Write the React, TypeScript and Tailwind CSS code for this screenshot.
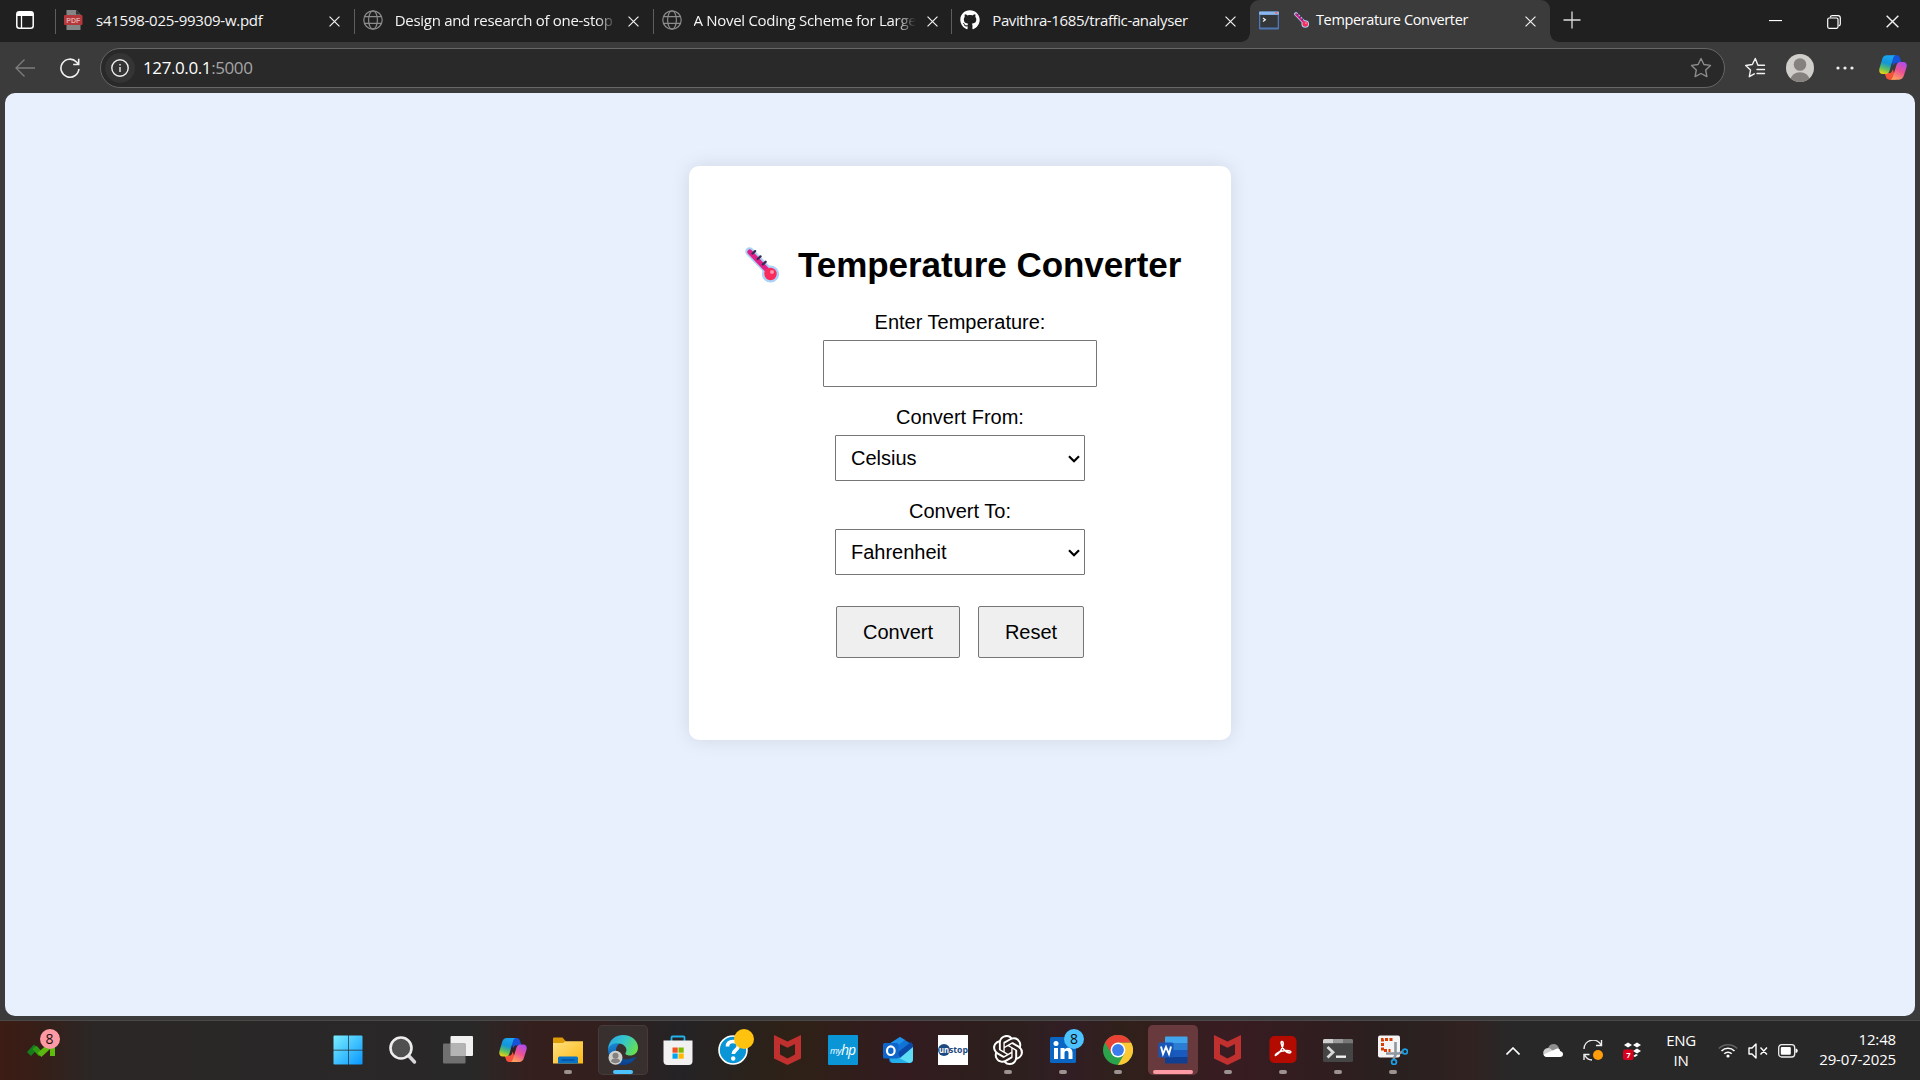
import React from 'react';
import { FaGithub } from 'react-icons/fa';
import { SiOpenai } from 'react-icons/si';

const Thermometer = ({ className }: { className: string }) => (
  <svg viewBox="0 0 34 36" className={className}>
    <path d="M4.5 4.5 L25 25.5" stroke="#a9d3f8" strokeWidth="8.6" strokeLinecap="round" />
    <circle cx="25.5" cy="27" r="8.6" fill="#a9d3f8" />
    <path d="M4.8 5 L24 25" stroke="#e0218a" strokeWidth="5" strokeLinecap="round" />
    <path d="M7.5 6.5 l2.6-2.4 M12.7 12 l2.8-2.6 M17.8 17.4 l2.8-2.6" stroke="#3b2a55" strokeWidth="2.3" strokeLinecap="round" />
    <circle cx="25.5" cy="27" r="6.2" fill="#fb2c5b" />
    <circle cx="27" cy="25" r="2" fill="#ff93ac" />
  </svg>
);

const Copilot = ({ className, id }: { className: string; id: string }) => (
  <svg viewBox="0 0 30 28" className={className}>
    <defs>
      <linearGradient id={id + 'a'} x1="0.5" y1="0" x2="0.2" y2="1">
        <stop offset="0" stopColor="#1aa5ee" />
        <stop offset="0.4" stopColor="#1495d8" />
        <stop offset="0.7" stopColor="#5bbf62" />
        <stop offset="1" stopColor="#f5d30f" />
      </linearGradient>
      <linearGradient id={id + 'b'} x1="0.8" y1="0" x2="0.3" y2="1">
        <stop offset="0" stopColor="#a94cf0" />
        <stop offset="0.5" stopColor="#ee5193" />
        <stop offset="1" stopColor="#fda35c" />
      </linearGradient>
    </defs>
    <path d="M12 1 H19 C21.5 1 22.3 3 23 5.2 L24 9 H19.5 C17 9 16 10 15.2 12.5 Z" fill="#1753d8" />
    <path d="M18 27 H11 C8.5 27 7.7 25 7 22.8 L6 20 H10.5 C13 20 14 18.5 14.8 15.5 Z" fill="#f4533a" />
    <path d="M8.5 1 H18 C16 1.3 15.4 3 14.7 5.4 L11.5 17 C10.8 19.4 9.7 21 7 21 H4 C.5 21 -.4 18 .6 14.5 L3.3 5.3 C4.2 2.5 5.7 1 8.5 1Z" fill={`url(#${id}a)`} />
    <path d="M21.5 27 H12 C14 26.7 14.6 25 15.3 22.6 L18.5 12 C19.2 9.5 20.3 8 23 8 H26 C29.5 8 30.4 11 29.4 14 L26.7 22.7 C25.8 25.5 24.3 27 21.5 27Z" fill={`url(#${id}b)`} />
  </svg>
);

const Globe = () => (
  <svg viewBox="0 0 20 20" className="size-5" fill="none" stroke="#8b8b8b" strokeWidth="1.2">
    <circle cx="10" cy="10" r="9.2" />
    <ellipse cx="10" cy="10" rx="4.4" ry="9.2" />
    <path d="M1.5 6.6h17M1.5 13.4h17" />
  </svg>
);

const PdfIcon = () => (
  <svg viewBox="0 0 20 20" className="size-5">
    <path d="M2.500 0h9.500l4.500 4.500V20H2.500z" fill="#858585" />
    <path d="M12 0v4.500h4.500z" fill="#333" />
    <rect x="0" y="5" width="18.500" height="10" rx="1" fill="#b3373b" />
    <text x="9.300" y="12.600" textAnchor="middle" fontFamily="Liberation Sans" fontWeight="bold" fontSize="7" fill="#e0a9a9">PDF</text>
  </svg>
);

const ConsoleIcon = () => (
  <svg viewBox="0 0 20 20" className="size-5">
    <rect x="0" y="1.500" width="20" height="18" rx="1" fill="#4f78b5" />
    <rect x="0" y="1.500" width="20" height="3.200" rx="1" fill="#8ab8ec" />
    <rect x="16" y="2" width="2.500" height="2" fill="#d77c78" />
    <rect x="1.300" y="5" width="17.400" height="12.500" fill="#34373a" />
    <path d="M4 8l2.300 1.700L4 11.500" stroke="#eee" strokeWidth="1.300" fill="none" />
  </svg>
);

const Cross = ({ className }: { className: string }) => (
  <svg viewBox="0 0 12 12" className={className} fill="none" stroke="#f2f2f2" strokeWidth="1.3">
    <path d="M.6.6l10.800 10.800M11.400.6L.6 11.400" />
  </svg>
);

const tabs = [
  { icon: <PdfIcon />, title: 's41598-025-99309-w.pdf', fade: false, font: 'tracking-[-0.25px]' },
  { icon: <Globe />, title: 'Design and research of one-stop s', fade: true, font: 'tracking-[-0.3px]' },
  { icon: <Globe />, title: 'A Novel Coding Scheme for Large', fade: true, font: 'tracking-[-0.3px]' },
  { icon: <FaGithub className="size-5 text-white" />, title: 'Pavithra-1685/traffic-analyser', fade: false, font: 'tracking-[-0.38px]' },
];

function TabStrip() {
  return (
    <div className="flex h-[42px] bg-[#202020]">
      <div className="flex w-[55px] items-center pl-4 pb-[2px]">
        <svg viewBox="0 0 18 18" className="size-[18px]">
          <rect x="0.800" y="0.800" width="16.400" height="16.400" rx="2.500" fill="none" stroke="#fff" strokeWidth="1.500" />
          <path d="M1 5V3a2 2 0 012-2h12a2 2 0 012 2v2z" fill="#fff" />
          <path d="M5.500 5v12" stroke="#fff" strokeWidth="1.300" />
        </svg>
      </div>
      {tabs.map((t) => (
        <div key={t.title} className="flex w-[298.750px] shrink-0 items-center pb-[2px]">
          <div className="mt-[3px] h-[25px] w-px bg-[#5e5e5e]" />
          <div className="ml-2 w-5">{t.icon}</div>
          <div className={`ml-3 w-[224px] overflow-hidden whitespace-nowrap text-[15px] leading-5 text-[#f5f5f5] ${t.font} ${t.fade ? '[mask-image:linear-gradient(to_right,black_90%,transparent_99%)]' : ''}`}>{t.title}</div>
          <Cross className="ml-[9px] mt-[2px] size-[11px]" />
        </div>
      ))}
      <div className="relative flex w-[300px] items-center rounded-t-[9px] bg-[#3b3b3b] pb-[2px]">
        <div className="absolute bottom-0 -left-[9px] size-[9px] bg-[radial-gradient(circle_at_0_0,#202020_8.500px,#3b3b3b_9px)]" />
        <div className="absolute bottom-0 -right-[9px] size-[9px] bg-[radial-gradient(circle_at_100%_0,#202020_8.500px,#3b3b3b_9px)]" />
        <div className="ml-[9px]"><ConsoleIcon /></div>
        <Thermometer className="ml-[15px] h-4 w-[15px]" />
        <div className="ml-[7px] w-[209px] whitespace-nowrap text-[14.500px] leading-5 tracking-[-0.37px] text-white">Temperature Converter</div>
        <Cross className="mt-[2px] size-[11px]" />
      </div>
      <div className="flex w-[192px] items-center pl-[13px] pb-[3px]">
        <svg viewBox="0 0 18 18" className="size-[18px]" stroke="#ddd" strokeWidth="1.300"><path d="M9 .5v17M.5 9h17" /></svg>
      </div>
      <div className="flex flex-1 items-center gap-[45px] pl-[27px] pt-[1px]">
        <svg viewBox="0 0 14 14" className="size-[13px]" stroke="#fff" strokeWidth="1.200"><path d="M0 6h14" /></svg>
        <svg viewBox="0 0 14 14" className="size-[14px]" fill="none" stroke="#fff" strokeWidth="1.200">
          <rect x="0.700" y="3" width="10.300" height="10.300" rx="1.500" />
          <path d="M3.200 2.500C3.400 1.200 4.300.7 5.300.7H11c1.500 0 2.300.8 2.300 2.300v6c0 1-.6 1.700-1.600 1.900" />
        </svg>
        <Cross className="size-[13px]" />
      </div>
    </div>
  );
}

function Toolbar() {
  return (
    <div className="flex h-[51px] items-center bg-[#3b3b3b] pl-[15px]">
      <svg viewBox="0 0 20 20" className="size-5" fill="none" stroke="#7d7d7d" strokeWidth="1.300"><path d="M20 10H1M9.500 1.500L1 10l8.500 8.500" /></svg>
      <svg viewBox="0 0 20 20" className="ml-[25px] size-5" fill="none" stroke="#f0f0f0" strokeWidth="1.600">
        <path d="M18.900 11A9 9 0 1 1 16.500 4l2 2.300M18.700.8v5.700h-5.500" />
      </svg>
      <div className="ml-5 flex h-10 w-[1625px] items-center rounded-full border border-[#676767] bg-[#292929] pl-1">
        <div className="flex size-[30px] items-center justify-center rounded-full bg-[#343434]">
          <svg viewBox="0 0 18 18" className="size-[18px]" fill="none" stroke="#f0f0f0" strokeWidth="1.400"><circle cx="9" cy="9" r="8.200" /><path d="M9 8v5M9 5v1.500" /></svg>
        </div>
        <div className="ml-2 flex-1 text-[17px] leading-6 tracking-[-0.4px] text-white">127.0.0.1<span className="text-[#a5a5a5]">:5000</span></div>
        <svg viewBox="0 0 22 22" className="mr-[12px] size-[22px]" fill="none" stroke="#8c8c8c" strokeWidth="1.400" strokeLinejoin="round">
          <path d="M11 1.500l2.900 6 6.600.9-4.800 4.600 1.200 6.600L11 16.500l-5.900 3.100 1.200-6.600L1.500 8.400l6.600-.9z" />
        </svg>
      </div>
      <svg viewBox="0 0 22 22" className="ml-[19px] size-[22px]" fill="none" stroke="#f2f2f2" strokeWidth="1.400" strokeLinejoin="round" strokeLinecap="round">
        <path d="M20.500 8.300h-6.600L11.300 1.500 8.300 7.500l-6.600 1 4.800 4.600-1.200 6.600 5-2.900M13 12.500h7.500M13 16.500h7.500" />
      </svg>
      <svg viewBox="0 0 28 28" className="ml-[20px] size-7">
        <clipPath id="av"><circle cx="14" cy="14" r="14" /></clipPath>
        <g clipPath="url(#av)"><rect width="28" height="28" fill="#d0cecb" /><circle cx="14" cy="10.500" r="6.300" fill="#85817e" /><ellipse cx="14" cy="26" rx="9.500" ry="7.800" fill="#85817e" /></g>
      </svg>
      <svg viewBox="0 0 18 4" className="ml-[22px] h-1 w-[18px]" fill="#eee"><circle cx="2" cy="2" r="1.600" /><circle cx="9" cy="2" r="1.600" /><circle cx="16" cy="2" r="1.600" /></svg>
      <Copilot id="top" className="ml-[25px] h-[27px] w-7" />
    </div>
  );
}

const Select = ({ value }: { value: string }) => (
  <div className="flex h-[46px] w-[250px] items-center justify-between rounded-[1px] border border-[#767676] bg-white pl-[15px] pr-1 text-[20px] leading-6">
    <span>{value}</span>
    <svg viewBox="0 0 12 8" className="mt-[1px] h-2 w-3" fill="none" stroke="#000" strokeWidth="2.200"><path d="M1 1.200l5 5 5-5" /></svg>
  </div>
);

function Converter() {
  return (
    <div className="flex h-[574px] w-[542px] flex-col items-center rounded-[10px] bg-white pt-[78px] font-['Liberation_Sans',Arial,sans-serif] text-[20px] leading-6 text-black shadow-[0_0_19px_rgba(0,0,0,0.1)]">
      <h1 className="flex w-full items-center pl-[56px] text-[35px] font-bold leading-[42px]">
        <Thermometer className="mr-[19px] h-9 w-[34px]" />
        <span className="whitespace-nowrap tracking-[-0.06px]">Temperature Converter</span>
      </h1>
      <div className="mt-6">Enter Temperature:</div>
      <div className="mt-[6px] h-[47px] w-[274px] rounded-[1px] border border-[#767676] bg-white" />
      <div className="mt-[18px] mb-[6px]">Convert From:</div>
      <Select value="Celsius" />
      <div className="mt-[18px] mb-[6px]">Convert To:</div>
      <Select value="Fahrenheit" />
      <div className="mt-[31px] flex gap-[18px]">
        <button className="h-[52px] w-[124px] rounded-[2px] border border-[#767676] bg-[#efefef]">Convert</button>
        <button className="h-[52px] w-[106px] rounded-[2px] border border-[#767676] bg-[#efefef]">Reset</button>
      </div>
    </div>
  );
}

const McAfee = () => (
  <svg viewBox="0 0 27 30" className="h-[30px] w-[27px]">
    <path d="M0 0L13.500 6.500 27 0V23.500L13.500 30 0 23.500Z M6 9V19.500L13.500 23.500 21 19.500V9L13.500 12.800Z" fill="#c0302e" fillRule="evenodd" />
  </svg>
);

const WindowsIcon = () => (
  <svg viewBox="0 0 30 30" className="size-[30px]">
    <linearGradient id="win" gradientUnits="userSpaceOnUse" x1="0" y1="0" x2="30" y2="30"><stop offset="0" stopColor="#7cf0ff" /><stop offset="1" stopColor="#0795ff" /></linearGradient>
    <path d="M1.500.5h13.500v14.200H.5V1.500a1 1 0 011-1zM15.700.5h12.800a1 1 0 011 1v13.200H15.700zM.5 15.500h14.500v14H1.500a1 1 0 01-1-1zM15.700 15.500h13.800v13a1 1 0 01-1 1H15.700z" fill="url(#win)" />
  </svg>
);

const SearchIcon = () => (
  <svg viewBox="0 0 30 30" className="size-[30px]">
    <path d="M20 20l6.500 7" stroke="#d8d8dc" strokeWidth="3.500" strokeLinecap="round" />
    <circle cx="13" cy="13" r="10.500" fill="#505050" stroke="#ededed" strokeWidth="2.600" />
  </svg>
);

const TaskViewIcon = () => (
  <svg viewBox="0 0 30 30" className="size-[30px]">
    <rect x="7.500" y="1" width="22.500" height="20" rx="1" fill="#f0f0f0" />
    <rect x="0" y="8.500" width="22.500" height="20" rx="1" fill="#707070" />
    <path d="M7.500 8.500h15V21h-15z" fill="#b4b4b4" />
  </svg>
);

const FolderIcon = () => (
  <svg viewBox="0 0 30 27" className="h-[27px] w-[30px]">
    <linearGradient id="fold" x1="0" y1="0" x2="1" y2="1"><stop stopColor="#ffe080" /><stop offset="1" stopColor="#fdb913" /></linearGradient>
    <path d="M0 1.500Q0 .5 1 .5h8.500l3.500 4v5H0z" fill="#dd9b05" />
    <path d="M0 6h10l2.500-1.800H30V26.500H0z" fill="url(#fold)" />
    <path d="M5 26.500V21a1.500 1.500 0 011.500-1.500h17A1.500 1.500 0 0125 21v5.500z" fill="#0873c8" />
    <path d="M8.500 23h13" stroke="#044b93" strokeWidth="1.200" />
  </svg>
);

const EdgeIcon = () => (
  <svg viewBox="0 0 30 30" className="size-[30px]">
    <defs>
      <linearGradient id="e1" x1="0" y1="0.200" x2="1" y2="0.600"><stop stopColor="#2aa7e5" /><stop offset="0.500" stopColor="#35c7c8" /><stop offset="1" stopColor="#66e04e" /></linearGradient>
      <linearGradient id="e2" x1="0" y1="0" x2="0.500" y2="1"><stop stopColor="#1b8fdb" /><stop offset="1" stopColor="#0c3f8f" /></linearGradient>
    </defs>
    <path d="M0 14C1 8 7 6 12 8C8 11 7 15 9 20C11 25 19 26 28 22C25 28 20 30 15 30C6 30 0 23 0 14Z" fill="url(#e2)" />
    <path d="M0 14C1 5 7 0 15 0C24 0 30 6 30 12.500C30 18 26 20.500 22 20.500C19 20.500 16.800 19.300 17.500 18C19.500 15.500 18.500 11 13.500 9C8 7 2 9 0 14Z" fill="url(#e1)" />
    <path d="M9 20C11 25 19 26 28 22C24 30 12 30 9 20Z" fill="#0b4c94" />
    <circle cx="7.500" cy="22.700" r="7" fill="#cfcfcc" /><circle cx="7.500" cy="20.800" r="3" fill="#85817e" /><path d="M3 26.500a4.500 3 0 019 0 6.500 6.500 0 01-9 0z" fill="#85817e" />
  </svg>
);

const StoreIcon = () => (
  <svg viewBox="0 0 30 30" className="size-[30px]">
    <path d="M8.500 7V2.500a1 1 0 011-1h11a1 1 0 011 1V7" fill="none" stroke="#23b4ee" strokeWidth="1.800" />
    <path d="M.5 5.500h29V26a4 4 0 01-4 4h-21a4 4 0 01-4-4z" fill="#f1f1f1" />
    <path d="M9.500 12.500h5.200v5.200H9.500z" fill="#f25022" /><path d="M15.500 12.500h5.200v5.200h-5.200z" fill="#7fba00" /><path d="M9.500 18.500h5.200v5.200H9.500z" fill="#00a4ef" /><path d="M15.500 18.500h5.200v5.200h-5.200z" fill="#ffb900" />
  </svg>
);

const HelpIcon = () => (
  <svg viewBox="0 0 30 30" className="size-[30px] overflow-visible">
    <circle cx="15" cy="15" r="14" fill="#0a96d6" stroke="#fff" strokeWidth="1.600" />
    <path d="M9.500 11.500C9.500 8 12 6.500 15 6.500s5.300 1.800 5.300 4.500c0 4-5 4-5 8" stroke="#fff" strokeWidth="3.600" fill="none" />
    <circle cx="15.200" cy="23.500" r="2.200" fill="#fff" />
    <circle cx="26" cy="4" r="10" fill="#ffc20e" />
  </svg>
);

const MyHp = () => (
  <div className="flex size-[30px] items-center justify-center rounded-[1px] bg-[#0a96d6] font-['Open_Sans',sans-serif] italic leading-none tracking-[-0.5px] text-white">
    <span className="text-[9px]">my</span><span className="text-[14px] tracking-[-1.200px]">hp</span>
  </div>
);

const OutlookIcon = () => (
  <svg viewBox="0 0 30 28" className="h-[28px] w-[30px]">
    <path d="M6 8L17 1l13 8v14a4 4 0 01-4 4H10a4 4 0 01-4-4z" fill="#1273d6" />
    <path d="M6 8L17 1l5 3L9 14z" fill="#1e90e8" />
    <path d="M14 17L28 6l2 3v7L18 23z" fill="#0b49a8" />
    <path d="M30 11v12a4 4 0 01-4 4H11z" fill="#5ddcf6" />
    <path d="M8 18l18 9H11a4 4 0 01-4-4z" fill="#23aee9" />
    <rect x="0" y="7" width="15.500" height="15.500" rx="1.500" fill="#0e66ca" />
    <ellipse cx="7.800" cy="14.700" rx="3.800" ry="4.300" stroke="#fff" strokeWidth="2.200" fill="none" />
  </svg>
);

const Unstop = () => (
  <svg viewBox="0 0 30 30" className="size-[30px]">
    <rect width="30" height="30" fill="#fff" />
    <circle cx="6" cy="15" r="6" fill="#1c4980" />
    <text x="1" y="17.500" fontFamily="Open Sans" fontWeight="bold" fontSize="8.500" fill="#fff" textLength="10" lengthAdjust="spacingAndGlyphs">un</text>
    <text x="11" y="17.500" fontFamily="Open Sans" fontWeight="bold" fontSize="8.500" fill="#1c4980" textLength="19" lengthAdjust="spacingAndGlyphs">stop</text>
  </svg>
);

const LinkedIn = () => (
  <svg viewBox="0 0 30 30" className="size-[30px] overflow-visible">
    <rect x="2" y="2" width="26" height="26" rx="1.500" fill="#0a66c2" />
    <circle cx="8" cy="8.500" r="2.500" fill="#fff" />
    <path d="M6 13h4v11H6zM12.500 13h4v1.500c2.200-3 8-2.500 8 3V24h-4v-6c0-3-4-3-4 0v6h-4z" fill="#fff" />
    <circle cx="26" cy="4" r="10" fill="#4cc2ff" />
    <text x="26" y="9" textAnchor="middle" fontFamily="Open Sans" fontSize="14" fill="#111">8</text>
  </svg>
);

const Chrome = () => (
  <svg viewBox="0 0 30 30" className="size-[30px]">
    <circle cx="15" cy="15" r="15" fill="#2ba24c" />
    <path d="M28 7.500A15 15 0 0115 30L21.500 18.500 15 7.500z" fill="#fcc934" />
    <path d="M2 7.500A15 15 0 0128 7.500H15L8.500 18.700z" fill="#ea4335" />
    <circle cx="15" cy="15" r="7.400" fill="#fff" /><circle cx="15" cy="15" r="5.900" fill="#3b7ded" />
  </svg>
);

const Word = () => (
  <svg viewBox="0 0 30 28" className="h-[28px] w-[30px]">
    <path d="M7 1.500a1 1 0 011-1h20.500a1 1 0 011 1V7H7z" fill="#41a5ee" /><path d="M7 7h22.500v7H7z" fill="#2b7cd3" /><path d="M7 14h22.500v7H7z" fill="#185abd" /><path d="M7 21h22.500v5.500a1 1 0 01-1 1H8a1 1 0 01-1-1z" fill="#103f91" />
    <rect x="0.500" y="6.500" width="15" height="15" rx="1.500" fill="#1857b8" />
    <path d="M3 10.500l2 7.500L8 11l3 7 2-7.500" stroke="#fff" strokeWidth="1.900" fill="none" />
  </svg>
);

const Acrobat = () => (
  <svg viewBox="0 0 28 28" className="mb-[2px] h-[27px] w-[28px]">
    <rect width="28" height="28" rx="5" fill="#b30b00" />
    <path d="M6.500 20C11 18 15 10.500 14 6.500c-.4-1.500-2.200-1-2 .8.500 5 5 10 8.500 10.200 2.300 0 2.200-2-.2-2.300-4-.4-10 .8-13 3-1.600 1.300-1.500 2.300-.8 1.800z" fill="none" stroke="#fff" strokeWidth="1.600" />
  </svg>
);

const Terminal = () => (
  <svg viewBox="0 0 30 23" className="h-[23px] w-[30px]">
    <rect width="30" height="23" rx="1.500" fill="#454545" />
    <path d="M0 4.200V1.500A1.500 1.500 0 011.500 0H10v4.200z" fill="#cfcfcf" /><path d="M10 0h10v4.200H10z" fill="#9a9a9a" /><path d="M20 0h8.500A1.500 1.500 0 0130 1.500v2.700H20z" fill="#777" />
    <path d="M4.500 8l5.500 5.300-5.500 5.300" stroke="#d9d9d9" strokeWidth="2.800" fill="none" /><path d="M13 17.700h10" stroke="#f2f2f2" strokeWidth="2.400" />
  </svg>
);

const Snip = () => (
  <svg viewBox="0 0 30 30" className="size-[30px]">
    <rect x="0" y="0.500" width="22" height="22" rx="2" fill="#f4f4f4" />
    <path d="M14.500 4.500H4.500v11h8" fill="none" stroke="#d83b01" strokeWidth="3" strokeDasharray="3 1.500" />
    <path d="M17.500 7v13l-2 4M8 18.500h13l4-2" stroke="#8e979f" strokeWidth="2.600" fill="none" />
    <circle cx="27" cy="16.500" r="2.400" fill="none" stroke="#1b9de2" strokeWidth="1.800" /><circle cx="16" cy="27" r="2.400" fill="none" stroke="#1b9de2" strokeWidth="1.800" />
  </svg>
);

type TaskApp = { name: string; icon: React.ReactNode; state?: 'running' | 'edge' | 'word' };
const apps: TaskApp[] = [
  { name: 'start', icon: <WindowsIcon /> },
  { name: 'search', icon: <SearchIcon /> },
  { name: 'taskview', icon: <TaskViewIcon /> },
  { name: 'copilot', icon: <Copilot id="task" className="h-[26px] w-[28px]" /> },
  { name: 'explorer', icon: <FolderIcon />, state: 'running' },
  { name: 'edge', icon: <EdgeIcon />, state: 'edge' },
  { name: 'store', icon: <StoreIcon /> },
  { name: 'help', icon: <HelpIcon /> },
  { name: 'mcafee', icon: <McAfee /> },
  { name: 'myhp', icon: <MyHp /> },
  { name: 'outlook', icon: <OutlookIcon /> },
  { name: 'unstop', icon: <Unstop /> },
  { name: 'chatgpt', icon: <SiOpenai className="size-[30px] text-white" />, state: 'running' },
  { name: 'linkedin', icon: <LinkedIn />, state: 'running' },
  { name: 'chrome', icon: <Chrome />, state: 'running' },
  { name: 'word', icon: <Word />, state: 'word' },
  { name: 'mcafee2', icon: <McAfee />, state: 'running' },
  { name: 'acrobat', icon: <Acrobat />, state: 'running' },
  { name: 'terminal', icon: <Terminal />, state: 'running' },
  { name: 'snip', icon: <Snip />, state: 'running' },
];

const cellStyle = { idle: '', running: '', edge: 'bg-[#382f2f] ring-1 ring-inset ring-[#463a3a]', word: 'bg-[#693a3d]' };
const barStyle = { idle: '', running: 'w-2 bg-[#9c9391]', edge: 'w-5 bg-[#4cc2ff]', word: 'w-10 bg-[#ff99a4]' };

function Taskbar() {
  return (
    <div className="flex h-[59px] bg-[linear-gradient(to_right,#3c1c14_0px,#371e17_35px,#2a2726_95px,#292828_470px,#351f1d_535px,#321f1e_600px,#242325_680px,#2e2116_790px,#331b20_905px,#2c1f1c_1000px,#311e25_1070px,#30201a_1120px,#381c22_1230px,#301d20_1320px,#29201f_1400px,#302221_1470px,#292828_1510px,#292828_1920px)]">
      <div className="w-[320px] shrink-0 pl-[27px] pt-[6px]">
        <svg viewBox="0 0 36 34" className="h-[34px] w-9">
          <path d="M2 27l7-7.500" stroke="#177c1c" strokeWidth="5.500" />
          <path d="M7.500 20.500l6.500 7" stroke="#2f9a14" strokeWidth="5.500" />
          <path d="M12.500 28L24 17.500" stroke="#5cb90d" strokeWidth="5.500" />
          <path d="M14 15.500h14V29h-5V20z" fill="#5fbd0c" />
          <circle cx="23" cy="12" r="10" fill="#ff99a4" />
          <text x="22.500" y="17" textAnchor="middle" fontFamily="Open Sans" fontSize="14" fill="#1c1010">8</text>
        </svg>
      </div>
      <div className="flex w-[1100px] shrink-0">
        {apps.map((a) => (
          <div key={a.name} className="flex w-[55px] shrink-0 justify-center pt-1">
            <div className={`relative flex size-[50px] items-center justify-center rounded-[5px] ${cellStyle[a.state ?? 'idle']}`}>
              {a.icon}
              <div className={`absolute bottom-[1px] left-1/2 h-1 -translate-x-1/2 rounded-full ${barStyle[a.state ?? 'idle']}`} />
            </div>
          </div>
        ))}
      </div>
      <div className="flex flex-1 items-center pl-[86px] text-[15px] leading-5 text-white">
        <svg viewBox="0 0 14 8" className="h-2 w-[14px]" fill="none" stroke="#fff" strokeWidth="1.600"><path d="M.5 7.500L7 1l6.500 6.500" /></svg>
        <svg viewBox="0 0 20 13" className="ml-[23px] h-[13px] w-5">
          <path d="M5 8C4 3 7 0 10.500 0c3 0 5 2 5.500 4.500L9 9z" fill="#8f8f8f" />
          <path d="M4 13C-1 13-1.500 4.500 5 4c3 0 5 3 10 9z" fill="#cfcfcf" />
          <path d="M4 13C2 13 .8 12 .5 10.500L13 5c3-1 4 0 4 2 4 .5 4 6 0 6z" fill="#fff" />
        </svg>
        <svg viewBox="0 0 20 21" className="ml-5 h-[21px] w-5" fill="none" stroke="#eee" strokeWidth="1.400">
          <path d="M1 9A9 9 0 0118 5M18.500 0v5.500h-5.500M1 20v-5.500h5.500M2 15.500c1.500 3 4 4.500 7 4.500" /><circle cx="15" cy="15" r="5" fill="#ff9d0a" stroke="none" />
        </svg>
        <svg viewBox="0 0 19 18" className="ml-5 h-[18px] w-[19px]">
          <path d="M1 3l4-2.500L9 3 5 5.500zM10 3l4-2.500L18 3l-4 2.500zM10 9l4-2.500L18 9l-4 2.500zM10 14l3-2 2 1-3 2z" fill="#fff" />
          <rect x="0" y="7.500" width="10.500" height="10.500" rx="2" fill="#d9001f" /><text x="5.300" y="15.500" textAnchor="middle" fontFamily="Open Sans" fontSize="7.500" fontWeight="bold" fill="#fff">7</text>
        </svg>
        <div className="mb-[2px] ml-[22px] w-[34px] text-center tracking-[-0.3px]">ENG<br />IN</div>
        <svg viewBox="0 0 20 16" className="-mt-px ml-[20px] h-4 w-5" fill="none" stroke="#fff" strokeWidth="1.600">
          <path d="M.8 6.500a13 13 0 0118.400 0" stroke="#626262" /><path d="M3.500 9a9.200 9.200 0 0113 0M6.300 11.800a5.300 5.300 0 017.400 0" /><circle cx="10" cy="14" r="1.600" fill="#fff" stroke="none" />
        </svg>
        <svg viewBox="0 0 20 16" className="ml-[10px] h-4 w-5" fill="none" stroke="#fff" strokeWidth="1.400" strokeLinejoin="round"><path d="M1 5h3l4-4v14l-4-4H1zM12.500 4.500l6.500 7M19 4.500l-6.500 7" /></svg>
        <svg viewBox="0 0 20 14" className="ml-[10px] h-[14px] w-5"><rect x="0.700" y="0.700" width="16" height="12.300" rx="3" fill="none" stroke="#eee" strokeWidth="1.300" /><rect x="2.800" y="3" width="10" height="7.800" rx="1" fill="#fff" /><path d="M17.500 4.500c3 0 3 4.500 0 4.500z" fill="#fff" /></svg>
        <div className="mb-[3px] ml-auto mr-6 whitespace-nowrap text-right tracking-[-0.15px]">12:48<br />29-07-2025</div>
      </div>
    </div>
  );
}

export default function App() {
  return (
    <div className="flex h-[1080px] w-[1920px] flex-col overflow-hidden bg-[#3b3b3b] font-['Open_Sans','Noto_Sans',sans-serif]">
      <TabStrip />
      <Toolbar />
      <main className="mx-[5px] flex h-[923px] justify-center rounded-[10px] bg-[#e8effd] pt-[73px]">
        <Converter />
      </main>
      <div className="h-[5px] border-b border-[#4a4848]" />
      <Taskbar />
    </div>
  );
}
